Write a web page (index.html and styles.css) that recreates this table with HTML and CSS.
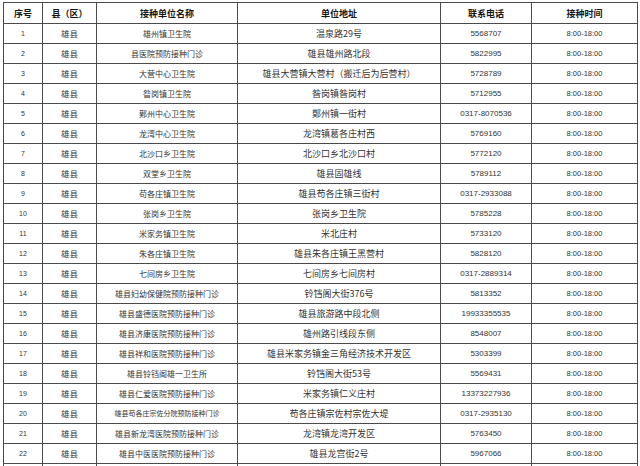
FILE: index.html
```html
<!DOCTYPE html>
<html lang="zh">
<head>
<meta charset="utf-8">
<link rel="stylesheet" href="styles.css">
</head>
<body>
<div class="sheet">
<table class="grid">
<colgroup>
<col class="c1"><col class="c2"><col class="c3"><col class="c4"><col class="c5"><col class="c6">
</colgroup>
<thead>
<tr class="head"><th>序号</th><th>县（区）</th><th>接种单位名称</th><th>单位地址</th><th>联系电话</th><th>接种时间</th></tr>
</thead>
<tbody>
<tr><td class="no">1</td><td class="cty">雄县</td><td class="nm">雄州镇卫生院</td><td class="ad">温泉路29号</td><td class="ph">5568707</td><td class="tm">8:00-18:00</td></tr>
<tr><td class="no">2</td><td class="cty">雄县</td><td class="nm">县医院预防接种门诊</td><td class="ad">雄县雄州路北段</td><td class="ph">5822995</td><td class="tm">8:00-18:00</td></tr>
<tr><td class="no">3</td><td class="cty">雄县</td><td class="nm">大营中心卫生院</td><td class="ad">雄县大营镇大营村（搬迁后为后营村）</td><td class="ph">5728789</td><td class="tm">8:00-18:00</td></tr>
<tr><td class="no">4</td><td class="cty">雄县</td><td class="nm">昝岗镇卫生院</td><td class="ad">昝岗镇昝岗村</td><td class="ph">5712955</td><td class="tm">8:00-18:00</td></tr>
<tr><td class="no">5</td><td class="cty">雄县</td><td class="nm">鄚州中心卫生院</td><td class="ad">鄚州镇一街村</td><td class="ph">0317-8070536</td><td class="tm">8:00-18:00</td></tr>
<tr><td class="no">6</td><td class="cty">雄县</td><td class="nm">龙湾中心卫生院</td><td class="ad">龙湾镇葛各庄村西</td><td class="ph">5769160</td><td class="tm">8:00-18:00</td></tr>
<tr><td class="no">7</td><td class="cty">雄县</td><td class="nm">北沙口乡卫生院</td><td class="ad">北沙口乡北沙口村</td><td class="ph">5772120</td><td class="tm">8:00-18:00</td></tr>
<tr><td class="no">8</td><td class="cty">雄县</td><td class="nm">双堂乡卫生院</td><td class="ad">雄县固雄线</td><td class="ph">5789112</td><td class="tm">8:00-18:00</td></tr>
<tr><td class="no">9</td><td class="cty">雄县</td><td class="nm">苟各庄镇卫生院</td><td class="ad">雄县苟各庄镇三街村</td><td class="ph">0317-2933088</td><td class="tm">8:00-18:00</td></tr>
<tr><td class="no">10</td><td class="cty">雄县</td><td class="nm">张岗乡卫生院</td><td class="ad">张岗乡卫生院</td><td class="ph">5785228</td><td class="tm">8:00-18:00</td></tr>
<tr><td class="no">11</td><td class="cty">雄县</td><td class="nm">米家务镇卫生院</td><td class="ad">米北庄村</td><td class="ph">5733120</td><td class="tm">8:00-18:00</td></tr>
<tr><td class="no">12</td><td class="cty">雄县</td><td class="nm">朱各庄镇卫生院</td><td class="ad">雄县朱各庄镇王黑营村</td><td class="ph">5828120</td><td class="tm">8:00-18:00</td></tr>
<tr><td class="no">13</td><td class="cty">雄县</td><td class="nm">七间房乡卫生院</td><td class="ad">七间房乡七间房村</td><td class="ph">0317-2889314</td><td class="tm">8:00-18:00</td></tr>
<tr><td class="no">14</td><td class="cty">雄县</td><td class="nm">雄县妇幼保健院预防接种门诊</td><td class="ad">铃铛阁大街376号</td><td class="ph">5813352</td><td class="tm">8:00-18:00</td></tr>
<tr><td class="no">15</td><td class="cty">雄县</td><td class="nm">雄县盛德医院预防接种门诊</td><td class="ad">雄县旅游路中段北侧</td><td class="ph">19933355535</td><td class="tm">8:00-18:00</td></tr>
<tr><td class="no">16</td><td class="cty">雄县</td><td class="nm">雄县济康医院预防接种门诊</td><td class="ad">雄州路引线段东侧</td><td class="ph">8548007</td><td class="tm">8:00-18:00</td></tr>
<tr><td class="no">17</td><td class="cty">雄县</td><td class="nm">雄县祥和医院预防接种门诊</td><td class="ad">雄县米家务镇金三角经济技术开发区</td><td class="ph">5303399</td><td class="tm">8:00-18:00</td></tr>
<tr><td class="no">18</td><td class="cty">雄县</td><td class="nm">雄县铃铛阁雄一卫生所</td><td class="ad">铃铛阁大街53号</td><td class="ph">5569431</td><td class="tm">8:00-18:00</td></tr>
<tr><td class="no">19</td><td class="cty">雄县</td><td class="nm">雄县仁爱医院预防接种门诊</td><td class="ad">米家务镇仁义庄村</td><td class="ph">13373227936</td><td class="tm">8:00-18:00</td></tr>
<tr><td class="no">20</td><td class="cty">雄县</td><td class="nm nm-sm">雄县苟各庄宗佐分院预防接种门诊</td><td class="ad">苟各庄镇宗佐村宗佐大堤</td><td class="ph">0317-2935130</td><td class="tm">8:00-18:00</td></tr>
<tr><td class="no">21</td><td class="cty">雄县</td><td class="nm">雄县新龙湾医院预防接种门诊</td><td class="ad">龙湾镇龙湾开发区</td><td class="ph">5763450</td><td class="tm">8:00-18:00</td></tr>
<tr><td class="no">22</td><td class="cty">雄县</td><td class="nm">雄县中医医院预防接种门诊</td><td class="ad">雄县龙宫街2号</td><td class="ph">5967066</td><td class="tm">8:00-18:00</td></tr>
<tr><td></td><td></td><td></td><td></td><td></td><td></td></tr>
</tbody>
</table>
</div>
</body>
</html>
```

FILE: styles.css
```css
html, body {
  margin: 0;
  padding: 0;
  background: #ffffff;
  overflow: hidden;
}

.sheet {
  width: 640px;
  height: 466px;
  overflow: hidden;
  padding: 2px 0 0 3px;
  box-sizing: border-box;
  background: #ffffff;
}

.grid {
  border-collapse: collapse;
  table-layout: fixed;
  width: 634px;
  font-family: "Noto Sans CJK SC", "Liberation Sans", sans-serif;
  color: #2b2b2b;
}

.c1 { width: 39px; }
.c2 { width: 54px; }
.c3 { width: 141px; }
.c4 { width: 203px; }
.c5 { width: 91px; }
.c6 { width: 106px; }

.grid th,
.grid td {
  border: 1px solid #4a4a4a;
  padding: 0;
  text-align: center;
  vertical-align: middle;
  white-space: nowrap;
  overflow: hidden;
  line-height: 1;
}

.grid tbody tr { height: 20px; }
.head { height: 21px; }

.grid th {
  font-size: 9px;
  font-weight: 700;
  color: #141414;
}

.no {
  font-family: "Liberation Sans", sans-serif;
  font-size: 7px;
  color: #333;
}

.cty {
  font-size: 8.5px;
  color: #333;
}

.nm {
  font-size: 8px;
  color: #333;
}

.nm-sm { font-size: 7px; }

.ad {
  font-size: 9px;
  color: #333;
}

.ph {
  font-family: "Liberation Sans", sans-serif;
  font-size: 8px;
  color: #333;
}

.tm {
  font-family: "Liberation Sans", sans-serif;
  font-size: 7.5px;
  color: #333;
}
```
